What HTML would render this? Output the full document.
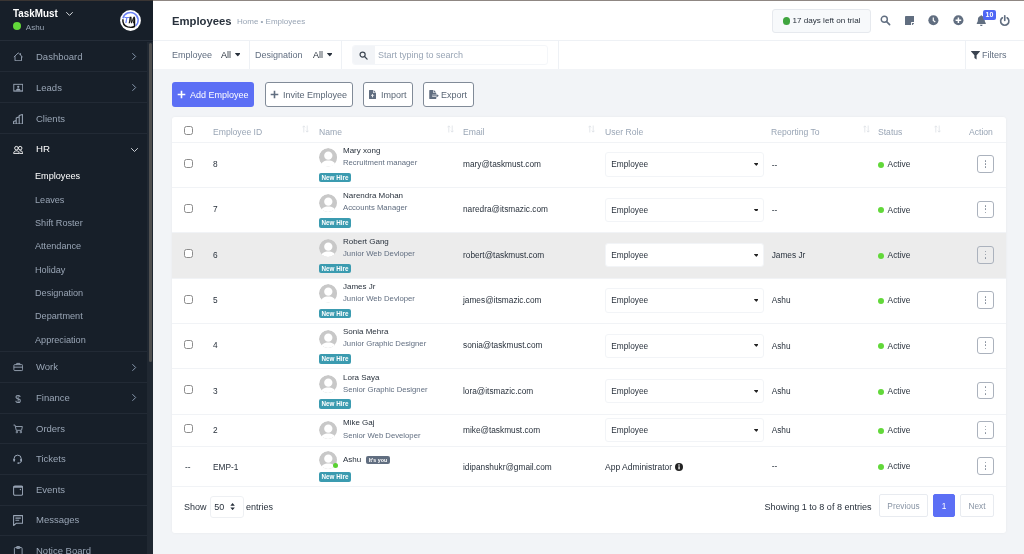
<!DOCTYPE html>
<html lang="en">
<head>
<meta charset="utf-8">
<title>Employees</title>
<style>
*{box-sizing:border-box;margin:0;padding:0}
html,body{width:1024px;height:554px;overflow:hidden}
body{font-family:"Liberation Sans",sans-serif;background:#f2f4f7;color:#28313c;position:relative;font-size:8.3px}
.wrap{position:absolute;left:0;top:0;width:1024px;height:554px;will-change:transform}
.topline{position:absolute;left:0;top:0;width:1024px;height:1px;background:linear-gradient(90deg,#3a3533 0,#3a3533 153px,#8f8783 153px);z-index:10}
.sb{position:absolute;left:0;top:1px;width:153px;height:553px;background:#171f29;overflow:hidden}
.sbh{position:absolute;left:0;top:0;width:153px;height:40px;border-bottom:1px solid #252d38}
.sbh .t{position:absolute;left:13px;top:5.700px;color:#fff;font-size:10.900px;font-weight:bold;transform:scaleX(.905);transform-origin:0 50%;white-space:nowrap}
.sbh .u{position:absolute;left:25.800px;top:21.500px;color:#99a5b5;font-size:8.050px}
.sbh .dot{position:absolute;left:12.700px;top:21px;width:8.200px;height:8.200px;border-radius:50%;background:#62d83a}
.sbh svg.chev{position:absolute;left:65px;top:10px}
.logo{position:absolute;left:120px;top:9px;width:21px;height:21px}
.mi{position:absolute;left:0;width:147px;height:31px;border-bottom:1px solid #222a35;color:#99a5b5;font-size:9.5px}
.mi span{position:absolute;left:36px;top:10px;white-space:nowrap}
.mi svg.ic{position:absolute;left:12.800px;top:10.800px}
.mi svg.ar{position:absolute;left:131px;top:10.600px}
.mi svg.ad{position:absolute;left:130px;top:13px}
.mi.act{color:#fff}
.smi{position:absolute;left:35px;color:#99a5b5;font-size:9.150px;white-space:nowrap}
.smi.act{color:#fff}
.trk{position:absolute;left:147.200px;top:41px;width:6px;height:513px;background:#202832}
.scr{position:absolute;left:148.900px;top:41.700px;width:3px;height:319.500px;background:#505050;border-radius:1.500px}
.hd{position:absolute;left:153px;top:1px;width:871px;height:40px;background:#fff;border-bottom:1px solid #eef1f5}
.hd h1{position:absolute;left:19px;top:13.700px;font-size:11.3px;font-weight:bold;color:#28313c}
.hd .bc{position:absolute;left:84px;top:15.500px;font-size:8px;color:#99a5b5;white-space:nowrap}
.trial{position:absolute;left:619px;top:8px;width:99px;height:23.700px;border:1px solid #e6e9ee;border-radius:3px;background:#f7f9fb;font-size:8.100px;color:#28313c}
.trial i{position:absolute;left:9.800px;top:7.200px;width:7.400px;height:7.400px;border-radius:50%;background:#3fa53f}
.trial span{position:absolute;left:19.500px;top:6.200px;white-space:nowrap}
.hic{position:absolute}
.bdg{position:absolute;left:830px;top:9px;width:13px;height:10px;border-radius:2px;background:#4f67f5;color:#fff;font-size:7px;font-weight:bold;text-align:center;line-height:10px}
.fb{position:absolute;left:153px;top:41px;width:871px;height:28px;background:#fff}
.fb .l{position:absolute;top:9px;font-size:9px;color:#616e80;white-space:nowrap}
.fb .v{position:absolute;top:9px;font-size:9px;color:#28313c;white-space:nowrap}
.fb .sep{position:absolute;top:0;width:1px;height:28px;background:#eef1f5}
.fb .car{position:absolute;top:12.300px}
.srch{position:absolute;left:199px;top:4px;width:196px;height:20px;border:1px solid #f4f6f9;border-radius:3px;background:#fff}
.srch .ig{position:absolute;left:0;top:0;width:22px;height:18px;background:#f2f4f7;border-radius:2px 0 0 2px}
.srch span{position:absolute;left:25px;top:4px;color:#99a5b5;font-size:9px;white-space:nowrap}
.btn{position:absolute;top:82px;height:25px;border-radius:3px;font-size:9px;white-space:nowrap}
.btn.p{background:#5c6ff5;color:#fff}
.btn.s{background:#fff;border:1px solid #818b98;color:#5a6675}
.btn span{position:absolute;top:7.500px}
.btn.s span{top:6.600px}
.card{position:absolute;left:172px;top:117px;width:834px;height:416px;background:#fff;border-radius:3px;box-shadow:0 0 3px rgba(0,0,0,.05)}
.th{position:absolute;top:9.700px;font-size:8.600px;color:#99a5b5;white-space:nowrap}
.so{position:absolute;top:7.500px}
.row{position:absolute;left:0;width:834px;border-top:1px solid #f1f3f6}
.row.hl{background:#ececec;background-clip:padding-box}
.cb{position:absolute;left:12px;width:8.800px;height:8.800px;border:1px solid #8c8c8c;border-radius:2.500px;background:#fff}
.c{position:absolute;font-size:8.300px;color:#28313c;white-space:nowrap}
.av{position:absolute;left:146.800px;width:18.600px;height:18.600px;border-radius:50%;overflow:hidden}
.on{position:absolute;left:161px;width:5px;height:5px;border-radius:50%;background:#59d131}
.nm{position:absolute;left:171px;font-size:8px;color:#28313c;white-space:nowrap}
.ds{position:absolute;left:171px;font-size:7.730px;color:#616e80;white-space:nowrap}
.nh{position:absolute;left:146.800px;width:32.400px;height:9.400px;background:#3b9bb0;border-radius:2px;color:#fff;font-size:6.300px;font-weight:bold;text-align:center;line-height:9.400px;white-space:nowrap}
.iy{position:absolute;left:193.600px;width:24.800px;height:8.400px;background:#616e80;border-radius:2px;color:#fff;font-size:5.300px;font-weight:bold;text-align:center;line-height:8.400px;white-space:nowrap}
.sel{position:absolute;left:433.300px;width:158.500px;height:24.300px;border:1px solid #f2f4f7;border-radius:3px;background:#fff}
.sel span{position:absolute;left:5px;top:6px;font-size:8.300px;color:#28313c}
.sel svg{position:absolute;left:147.400px;top:9.900px}
.st{position:absolute;left:706.400px;width:6px;height:6px;border-radius:50%;background:#62d83a}
.ab{position:absolute;left:805.300px;width:16.600px;height:17.600px;border:1px solid #abb2bd;border-radius:3px;background:transparent}
.ab i{position:absolute;left:6.450px;width:1.700px;height:1.700px;background:#858e9b;border-radius:50%}
.ft{position:absolute;font-size:9px;color:#28313c;white-space:nowrap}
.len{position:absolute;left:37.700px;top:378.700px;width:34.200px;height:22.500px;border:1px solid #eef0f3;border-radius:3px;background:#fff}
.len span{position:absolute;left:3.600px;top:5.300px;font-size:9px;color:#28313c}
.pg{position:absolute;top:377px;height:23px;border:1px solid #e8ebf0;border-radius:2px;background:#fff;font-size:8.300px;text-align:center}
.pg span{display:block;margin-top:6px}
.pg.on{background:#5c6ff5;border-color:#5c6ff5;color:#fff}
</style>
</head>
<body>
<div class="wrap">
<div class="topline"></div>
<div class="sb">
<div class="sbh"><div class="t">TaskMust</div><svg class="chev" width="9" height="6" viewBox="0 0 9 6"><path d="M1.300 1.200l3.200 3.200 3.200-3.200" fill="none" stroke="#e4e7ea" stroke-width=".95"/></svg><div class="dot"></div><div class="u">Ashu</div><div class="logo"><svg width="21" height="21" viewBox="0 0 21 21"><circle cx="10.5" cy="10.5" r="10.4" fill="#fff"/><path d="M3 8.3A7.700 7.700 0 1 1 15.600 15.900" fill="none" stroke="#6b82f7" stroke-width="1.500"/><path d="M2.900 9.300c-.3 3.700 1.700 6.700 4.700 7.600 2.200.600 4.900.600 6.900-.4V8.300" fill="none" stroke="#111" stroke-width="1.450"/><text x="3.800" y="13.300" font-family="Liberation Sans,sans-serif" font-size="8.400" font-weight="bold" font-style="italic" fill="#6b82f7">T</text><text x="8.700" y="13.400" font-family="Liberation Sans,sans-serif" font-size="8.300" font-weight="bold" font-style="italic" fill="#111" stroke="#111" stroke-width=".3" textLength="6.100" lengthAdjust="spacingAndGlyphs">M</text></svg></div></div>
<div class="mi" style="top:40px"><svg class="ic" width="10.500" height="9.625" viewBox="0 0 12 11"><path d="M1 5.8L6 1l5 4.8M2.3 4.8V10h7.4V4.8M8.6 1.4v2" fill="none" stroke="currentColor" stroke-width="1.050" stroke-linejoin="round"/></svg><span>Dashboard</span><svg class="ar" width="6" height="9" viewBox="0 0 6 9"><path d="M1.400 1.200l3.300 3.300-3.300 3.300" fill="none" stroke="#8798ad" stroke-width="1"/></svg></div>
<div class="mi" style="top:71px"><svg class="ic" width="10.500" height="9.625" viewBox="0 0 12 11"><rect x="0.9" y="1.5" width="10.2" height="7.5" fill="none" stroke="currentColor" stroke-width="1.050"/><circle cx="6" cy="4.3" r="1.3" fill="currentColor"/><path d="M3.4 8.6c.3-1.7 1.3-2.3 2.6-2.3s2.3.6 2.6 2.3z" fill="currentColor"/><path d="M.5 10.3h11" fill="none" stroke="currentColor" stroke-width="1.050"/></svg><span>Leads</span><svg class="ar" width="6" height="9" viewBox="0 0 6 9"><path d="M1.400 1.200l3.300 3.300-3.300 3.300" fill="none" stroke="#8798ad" stroke-width="1"/></svg></div>
<div class="mi" style="top:102px"><svg class="ic" style="top:10.700px;left:12.900px" width="10" height="10.600" viewBox="0 0 10 10.600"><path d="M.6 10V7.400l2.600-.8V10M3.200 6.600V4l3-1.300V10M6.200 2.700V1.500L9.400.5V10M0 10.100h10" fill="none" stroke="currentColor" stroke-width="1.050" stroke-linejoin="round"/></svg><span>Clients</span></div>
<div class="mi act" style="top:133px;border-bottom:none"><svg class="ic" width="10.500" height="9.625" viewBox="0 0 12 11"><circle cx="3.9" cy="3.6" r="2" fill="none" stroke="currentColor" stroke-width="1.050"/><circle cx="8.2" cy="3.6" r="2" fill="none" stroke="currentColor" stroke-width="1.050"/><path d="M.7 9.6c.2-2 1.4-3 3.2-3s3 1 3.2 3zM7.6 6.7c2.2-.4 3.6.8 3.8 2.9H7.4" fill="none" stroke="currentColor" stroke-width="1.050" stroke-linejoin="round"/></svg><span style="top:9.300px;font-size:9.700px">HR</span><svg class="ad" width="9" height="6" viewBox="0 0 9 6"><path d="M1.200 1.200l3.300 3.300 3.300-3.300" fill="none" stroke="#d5d9de" stroke-width=".95"/></svg></div>
<div class="smi act" style="top:170.3px">Employees</div>
<div class="smi" style="top:193.7px">Leaves</div>
<div class="smi" style="top:217.0px">Shift Roster</div>
<div class="smi" style="top:240.4px">Attendance</div>
<div class="smi" style="top:263.7px">Holiday</div>
<div class="smi" style="top:287.1px">Designation</div>
<div class="smi" style="top:310.4px">Department</div>
<div class="smi" style="top:333.8px">Appreciation</div>
<div class="mi" style="top:350px;height:1px;border-bottom:1px solid #222a35"></div>
<div class="mi" style="top:351.30px"><svg class="ic" style="top:10px" width="10.500" height="9.625" viewBox="0 0 12 11"><rect x="1" y="3" width="10" height="6.8" rx="1" fill="none" stroke="currentColor" stroke-width="1.050"/><path d="M4.2 3V1.6h3.6V3M1 5.9h10" fill="none" stroke="currentColor" stroke-width="1.050"/></svg><span style="top:9.200px">Work</span><svg class="ar" width="6" height="9" viewBox="0 0 6 9"><path d="M1.400 1.200l3.300 3.300-3.300 3.300" fill="none" stroke="#8798ad" stroke-width="1"/></svg></div>
<div class="mi" style="top:381.85px"><svg class="ic" width="10.500" height="9.625" viewBox="0 0 12 11"><text x="2.600" y="10" font-family="Liberation Sans,sans-serif" font-size="11.500" fill="currentColor" stroke="currentColor" stroke-width=".12">$</text></svg><span style="top:9.200px">Finance</span><svg class="ar" width="6" height="9" viewBox="0 0 6 9"><path d="M1.400 1.200l3.300 3.300-3.300 3.300" fill="none" stroke="#8798ad" stroke-width="1"/></svg></div>
<div class="mi" style="top:412.40px"><svg class="ic" width="10.500" height="9.625" viewBox="0 0 12 11"><path d="M.6 1.2h1.7l1.4 6h6.1l.9-4.3H2.8" fill="none" stroke="currentColor" stroke-width="1.050" stroke-linejoin="round"/><circle cx="4.4" cy="9.2" r=".9" fill="none" stroke="currentColor" stroke-width="1.050"/><circle cx="9" cy="9.2" r=".9" fill="none" stroke="currentColor" stroke-width="1.050"/></svg><span style="top:9.200px">Orders</span></div>
<div class="mi" style="top:442.95px"><svg class="ic" style="top:10px;left:12.400px" width="11.300" height="10.400" viewBox="0 0 12 11"><path d="M2.2 7V5a3.8 3.8 0 0 1 7.6 0v2.6c0 1.3-1 2-2.6 2" fill="none" stroke="currentColor" stroke-width="1.050"/><rect x="1.4" y="5" width="1.8" height="3" rx=".6" fill="currentColor"/><rect x="8.8" y="5" width="1.8" height="3" rx=".6" fill="currentColor"/><circle cx="6.6" cy="9.6" r=".9" fill="currentColor"/></svg><span style="top:9.200px">Tickets</span></div>
<div class="mi" style="top:473.50px"><svg class="ic" style="left:12.900px;top:10.600px" width="10.200" height="10.800" viewBox="0 0 10.200 10.800"><rect x=".6" y=".9" width="9" height="9.300" rx="1.300" fill="none" stroke="currentColor" stroke-width="1.050"/><path d="M.8 1.900h8.600" stroke="currentColor" stroke-width="1.700"/><circle cx="7.400" cy="4.500" r=".65" fill="currentColor"/></svg><span style="top:9.200px">Events</span></div>
<div class="mi" style="top:504.05px"><svg class="ic" style="left:12.900px;top:10.200px" width="10.200" height="11" viewBox="0 0 10.200 11"><path d="M.6 .6h9v7.700H3.100L.6 10.500z" fill="none" stroke="currentColor" stroke-width="1.050" stroke-linejoin="round"/><path d="M2.400 3.100h5.400M2.400 5.300h3.800" fill="none" stroke="currentColor" stroke-width="1.050"/></svg><span style="top:9.200px">Messages</span></div>
<div class="mi" style="top:534.60px"><svg class="ic" width="10.500" height="9.625" viewBox="0 0 12 11"><rect x="1.6" y="1.8" width="8.8" height="9" rx="1" fill="none" stroke="currentColor" stroke-width="1.050"/><rect x="4" y=".6" width="4" height="2.2" rx=".6" fill="none" stroke="currentColor" stroke-width="1.050"/></svg><span style="top:9.200px">Notice Board</span></div>
<div class="trk"></div><div class="scr"></div>
</div>
<div class="hd"><h1>Employees</h1><div class="bc">Home • Employees</div>
<div class="trial"><i></i><span>17 days left on trial</span></div>
<svg class="hic" style="left:727.300px;top:14.100px" width="10.700" height="10.700" viewBox="0 0 12 12"><circle cx="4.800" cy="4.800" r="3.400" fill="none" stroke="#616e80" stroke-width="1.600"/><path d="M7.400 7.400l3.400 3.400" stroke="#616e80" stroke-width="1.800" stroke-linecap="round"/></svg>
<svg class="hic" style="left:751.800px;top:14.500px" width="9.500" height="9.600" viewBox="0 0 10 10"><path d="M.9 0h8.200a.9.9 0 0 1 .9.900V6.300H7.200a.9.9 0 0 0-.9.900V10H.9A.9.900 0 0 1 0 9.100V.9A.9.900 0 0 1 .9 0z" fill="#616e80"/><path d="M7.300 10V7.600a.3.300 0 0 1 .3-.3H10z" fill="#616e80"/></svg>
<svg class="hic" style="left:775.100px;top:14.200px" width="11" height="11" viewBox="0 0 11 11"><circle cx="5.400" cy="5.200" r="5.050" fill="#616e80"/><path d="M5.300 2.400v3.100l2 1.400" fill="none" stroke="#fff" stroke-width="1.200"/></svg>
<svg class="hic" style="left:799.700px;top:14.100px" width="11" height="11" viewBox="0 0 11 11"><circle cx="5.400" cy="5.300" r="5.050" fill="#616e80"/><path d="M5.400 2.500v5.600M2.600 5.300h5.600" fill="none" stroke="#fff" stroke-width="1.500"/></svg>
<svg class="hic" style="left:823px;top:13.700px" width="11" height="12" viewBox="0 0 11 12"><path d="M5.300 0.300c.5 0 .8.300.8.800 1.700.400 2.600 1.700 2.600 3.600 0 1.800.500 2.700 1.100 3.300.300.400.1.900-.4.900H1.200c-.5 0-.7-.5-.4-.9.600-.6 1.100-1.500 1.100-3.300 0-1.900.9-3.200 2.600-3.600 0-.5.300-.8.800-.8zM4 9.700h2.600c0 .8-.6 1.400-1.300 1.400S4 10.500 4 9.700z" fill="#616e80"/></svg>
<div class="bdg">10</div>
<svg class="hic" style="left:846.400px;top:14px" width="11.500" height="11.500" viewBox="0 0 12 12"><path d="M3.500 2.900a4.300 4.300 0 1 0 5 0" fill="none" stroke="#616e80" stroke-width="1.700" stroke-linecap="round"/><path d="M6 .9v4.800" stroke="#616e80" stroke-width="1.700" stroke-linecap="round"/></svg>
</div>
<div class="fb">
<div class="l" style="left:19px">Employee</div><div class="v" style="left:68px">All</div><svg class="car" style="left:81.800px" width="5.600" height="3.300" viewBox="0 0 5.600 3.300"><path d="M.3 0h5a.3.300 0 0 1 .2.500L3 3.200a.3.300 0 0 1-.4 0L.1.500A.3.300 0 0 1 .3 0z" fill="#28313c"/></svg>
<div class="sep" style="left:96px"></div>
<div class="l" style="left:102px">Designation</div><div class="v" style="left:160px">All</div><svg class="car" style="left:173.800px" width="5.600" height="3.300" viewBox="0 0 5.600 3.300"><path d="M.3 0h5a.3.300 0 0 1 .2.500L3 3.200a.3.300 0 0 1-.4 0L.1.500A.3.300 0 0 1 .3 0z" fill="#28313c"/></svg>
<div class="sep" style="left:188px"></div>
<div class="srch"><div class="ig"><svg width="9" height="9" viewBox="0 0 12 12" style="position:absolute;left:5.800px;top:5px"><circle cx="4.800" cy="4.800" r="3.400" fill="none" stroke="#3d4652" stroke-width="1.600"/><path d="M7.400 7.400l3.400 3.400" stroke="#3d4652" stroke-width="1.700" stroke-linecap="round"/></svg></div><span>Start typing to search</span></div>
<div class="sep" style="left:405px"></div>
<div class="sep" style="left:812px"></div>
<svg style="position:absolute;left:818px;top:10px" width="9" height="9" viewBox="0 0 9 9"><path d="M.300 0h8.400c.3 0 .4.300.2.500L5.600 4.200V8.500L3.400 7V4.200L.1.500C-.1.300 0 0 .3 0z" fill="#3a4350"/></svg>
<div class="l" style="left:829px">Filters</div>
</div>
<div class="btn p" style="left:172px;width:82px"><svg style="position:absolute;left:4.800px;top:8px" width="9" height="9" viewBox="0 0 9 9"><path d="M4.500 .7v7.600M.7 4.500h7.600" stroke="#fff" stroke-width="1.600"/></svg><span style="left:18px">Add Employee</span></div>
<div class="btn s" style="left:265px;width:88px"><svg style="position:absolute;left:4px;top:7px" width="9" height="9" viewBox="0 0 9 9"><path d="M4.500 .7v7.600M.7 4.500h7.600" stroke="#616e80" stroke-width="1.600"/></svg><span style="left:17px">Invite Employee</span></div>
<div class="btn s" style="left:363px;width:50px"><svg style="position:absolute;left:4.700px;top:7.300px" width="7" height="9" viewBox="0 0 7 9"><path d="M0 .6C0 .3.300 0 .6 0H4v2.400c0 .3.300.6.600.6H7v5.400c0 .3-.3.600-.6.600H.6C.3 9 0 8.700 0 8.400zM4.600 0L7 2.400H4.600z" fill="#616e80"/><path d="M3.500 7.300V4.600M2.200 5.700l1.300-1.300 1.300 1.300" stroke="#fff" stroke-width=".9" fill="none"/></svg><span style="left:17px">Import</span></div>
<div class="btn s" style="left:423px;width:51px"><svg style="position:absolute;left:4.700px;top:7.300px" width="10.500" height="9" viewBox="0 0 10 9"><path d="M0 .6C0 .3.300 0 .6 0H4v2.400c0 .3.300.6.600.6H7v5.400c0 .3-.3.600-.6.600H.6C.3 9 0 8.700 0 8.400zM4.600 0L7 2.400H4.600z" fill="#616e80"/><path d="M3 5.800h5" stroke="#fff" stroke-width="2.200"/><path d="M3 5.800h4.500" stroke="#616e80" stroke-width="1"/><path d="M7.300 4l2.300 1.800-2.300 1.800z" fill="#616e80"/></svg><span style="left:17px">Export</span></div>
<div class="card">
<div class="cb" style="top:9px"></div>
<div class="th" style="left:41px">Employee ID</div>
<div class="th" style="left:147px">Name</div>
<div class="th" style="left:291px">Email</div>
<div class="th" style="left:433px">User Role</div>
<div class="th" style="left:599px">Reporting To</div>
<div class="th" style="left:706px">Status</div>
<div class="th" style="left:797px">Action</div>
<svg class="so" style="left:130.0px" width="7" height="8" viewBox="0 0 7 8"><path d="M1.800 7.500V1M.5 2.300L1.800.8l1.300 1.500M5.200.5V7M3.900 5.700l1.300 1.500 1.300-1.500" fill="none" stroke="#d9dde3" stroke-width=".7"/></svg>
<svg class="so" style="left:274.5px" width="7" height="8" viewBox="0 0 7 8"><path d="M1.800 7.500V1M.5 2.300L1.800.8l1.300 1.500M5.200.5V7M3.900 5.700l1.300 1.500 1.300-1.500" fill="none" stroke="#d9dde3" stroke-width=".7"/></svg>
<svg class="so" style="left:416.0px" width="7" height="8" viewBox="0 0 7 8"><path d="M1.800 7.500V1M.5 2.300L1.800.8l1.300 1.500M5.200.5V7M3.900 5.700l1.300 1.500 1.300-1.500" fill="none" stroke="#d9dde3" stroke-width=".7"/></svg>
<svg class="so" style="left:691.0px" width="7" height="8" viewBox="0 0 7 8"><path d="M1.800 7.500V1M.5 2.300L1.800.8l1.300 1.500M5.200.5V7M3.900 5.700l1.300 1.500 1.300-1.500" fill="none" stroke="#d9dde3" stroke-width=".7"/></svg>
<svg class="so" style="left:762.0px" width="7" height="8" viewBox="0 0 7 8"><path d="M1.800 7.500V1M.5 2.300L1.800.8l1.300 1.500M5.200.5V7M3.900 5.700l1.300 1.500 1.300-1.500" fill="none" stroke="#d9dde3" stroke-width=".7"/></svg>
<div class="row" style="top:24.80px;height:45.30px">
<div class="cb" style="top:16.1px"></div>
<div class="c" style="left:41px;top:16.4px">8</div>
<div class="av" style="top:5.5px"><svg width="18.600" height="18.600" viewBox="0 0 18 18"><circle cx="9" cy="9" r="9" fill="#c8c8c8"/><circle cx="9" cy="7.400" r="4" fill="#fff"/><path d="M1.500 18c.4-4.200 3.400-5.900 7.500-5.900s7.100 1.700 7.500 5.900z" fill="#fff"/></svg></div>
<div class="nm" style="top:3.400px">Mary xong</div>
<div class="ds" style="top:15.400px">Recruitment manager</div>
<div class="nh" style="top:30.200px">New Hire</div>
<div class="c" style="left:291px;top:16.4px">mary@taskmust.com</div>
<div class="sel" style="top:9.6px"><span>Employee</span><svg width="4.700" height="2.800" viewBox="0 0 5.600 3.300"><path d="M.3 0h5a.3.300 0 0 1 .2.500L3 3.200a.3.300 0 0 1-.4 0L.1.500A.3.300 0 0 1 .3 0z" fill="#222"/></svg></div>
<div class="c" style="left:599.700px;top:16.8px">--</div>
<div class="st" style="top:19.4px"></div>
<div class="c" style="left:715.600px;top:16.6px;font-size:8.400px">Active</div>
<div class="ab" style="top:12.6px"><i style="top:3.600px"></i><i style="top:6.800px"></i><i style="top:10px"></i></div>
</div>
<div class="row" style="top:70.10px;height:45.30px">
<div class="cb" style="top:16.1px"></div>
<div class="c" style="left:41px;top:16.4px">7</div>
<div class="av" style="top:5.5px"><svg width="18.600" height="18.600" viewBox="0 0 18 18"><circle cx="9" cy="9" r="9" fill="#c8c8c8"/><circle cx="9" cy="7.400" r="4" fill="#fff"/><path d="M1.500 18c.4-4.200 3.400-5.900 7.500-5.900s7.100 1.700 7.500 5.900z" fill="#fff"/></svg></div>
<div class="nm" style="top:3.400px">Narendra Mohan</div>
<div class="ds" style="top:15.400px">Accounts Manager</div>
<div class="nh" style="top:30.200px">New Hire</div>
<div class="c" style="left:291px;top:16.4px">naredra@itsmazic.com</div>
<div class="sel" style="top:9.6px"><span>Employee</span><svg width="4.700" height="2.800" viewBox="0 0 5.600 3.300"><path d="M.3 0h5a.3.300 0 0 1 .2.500L3 3.200a.3.300 0 0 1-.4 0L.1.500A.3.300 0 0 1 .3 0z" fill="#222"/></svg></div>
<div class="c" style="left:599.700px;top:16.8px">--</div>
<div class="st" style="top:19.4px"></div>
<div class="c" style="left:715.600px;top:16.6px;font-size:8.400px">Active</div>
<div class="ab" style="top:12.6px"><i style="top:3.600px"></i><i style="top:6.800px"></i><i style="top:10px"></i></div>
</div>
<div class="row hl" style="top:115.40px;height:45.60px">
<div class="cb" style="top:16.1px"></div>
<div class="c" style="left:41px;top:16.4px">6</div>
<div class="av" style="top:5.5px"><svg width="18.600" height="18.600" viewBox="0 0 18 18"><circle cx="9" cy="9" r="9" fill="#c8c8c8"/><circle cx="9" cy="7.400" r="4" fill="#fff"/><path d="M1.500 18c.4-4.200 3.400-5.900 7.500-5.900s7.100 1.700 7.500 5.900z" fill="#fff"/></svg></div>
<div class="nm" style="top:3.400px">Robert Gang</div>
<div class="ds" style="top:15.400px">Junior Web Devloper</div>
<div class="nh" style="top:30.200px">New Hire</div>
<div class="c" style="left:291px;top:16.4px">robert@taskmust.com</div>
<div class="sel" style="top:9.6px"><span>Employee</span><svg width="4.700" height="2.800" viewBox="0 0 5.600 3.300"><path d="M.3 0h5a.3.300 0 0 1 .2.500L3 3.200a.3.300 0 0 1-.4 0L.1.500A.3.300 0 0 1 .3 0z" fill="#222"/></svg></div>
<div class="c" style="left:599.700px;top:16.8px">James Jr</div>
<div class="st" style="top:19.4px"></div>
<div class="c" style="left:715.600px;top:16.6px;font-size:8.400px">Active</div>
<div class="ab" style="top:12.6px"><i style="top:3.600px"></i><i style="top:6.800px"></i><i style="top:10px"></i></div>
</div>
<div class="row" style="top:160.70px;height:45.30px">
<div class="cb" style="top:16.1px"></div>
<div class="c" style="left:41px;top:16.4px">5</div>
<div class="av" style="top:5.5px"><svg width="18.600" height="18.600" viewBox="0 0 18 18"><circle cx="9" cy="9" r="9" fill="#c8c8c8"/><circle cx="9" cy="7.400" r="4" fill="#fff"/><path d="M1.500 18c.4-4.200 3.400-5.900 7.500-5.900s7.100 1.700 7.500 5.900z" fill="#fff"/></svg></div>
<div class="nm" style="top:3.400px">James Jr</div>
<div class="ds" style="top:15.400px">Junior Web Devloper</div>
<div class="nh" style="top:30.200px">New Hire</div>
<div class="c" style="left:291px;top:16.4px">james@itsmazic.com</div>
<div class="sel" style="top:9.6px"><span>Employee</span><svg width="4.700" height="2.800" viewBox="0 0 5.600 3.300"><path d="M.3 0h5a.3.300 0 0 1 .2.500L3 3.200a.3.300 0 0 1-.4 0L.1.500A.3.300 0 0 1 .3 0z" fill="#222"/></svg></div>
<div class="c" style="left:599.700px;top:16.8px">Ashu</div>
<div class="st" style="top:19.4px"></div>
<div class="c" style="left:715.600px;top:16.6px;font-size:8.400px">Active</div>
<div class="ab" style="top:12.6px"><i style="top:3.600px"></i><i style="top:6.800px"></i><i style="top:10px"></i></div>
</div>
<div class="row" style="top:206.00px;height:45.30px">
<div class="cb" style="top:16.1px"></div>
<div class="c" style="left:41px;top:16.4px">4</div>
<div class="av" style="top:5.5px"><svg width="18.600" height="18.600" viewBox="0 0 18 18"><circle cx="9" cy="9" r="9" fill="#c8c8c8"/><circle cx="9" cy="7.400" r="4" fill="#fff"/><path d="M1.500 18c.4-4.200 3.400-5.900 7.500-5.900s7.100 1.700 7.500 5.900z" fill="#fff"/></svg></div>
<div class="nm" style="top:3.400px">Sonia Mehra</div>
<div class="ds" style="top:15.400px">Junior Graphic Designer</div>
<div class="nh" style="top:30.200px">New Hire</div>
<div class="c" style="left:291px;top:16.4px">sonia@taskmust.com</div>
<div class="sel" style="top:9.6px"><span>Employee</span><svg width="4.700" height="2.800" viewBox="0 0 5.600 3.300"><path d="M.3 0h5a.3.300 0 0 1 .2.500L3 3.200a.3.300 0 0 1-.4 0L.1.500A.3.300 0 0 1 .3 0z" fill="#222"/></svg></div>
<div class="c" style="left:599.700px;top:16.8px">Ashu</div>
<div class="st" style="top:19.4px"></div>
<div class="c" style="left:715.600px;top:16.6px;font-size:8.400px">Active</div>
<div class="ab" style="top:12.6px"><i style="top:3.600px"></i><i style="top:6.800px"></i><i style="top:10px"></i></div>
</div>
<div class="row" style="top:251.30px;height:45.30px">
<div class="cb" style="top:16.1px"></div>
<div class="c" style="left:41px;top:16.4px">3</div>
<div class="av" style="top:5.5px"><svg width="18.600" height="18.600" viewBox="0 0 18 18"><circle cx="9" cy="9" r="9" fill="#c8c8c8"/><circle cx="9" cy="7.400" r="4" fill="#fff"/><path d="M1.500 18c.4-4.200 3.400-5.900 7.500-5.900s7.100 1.700 7.500 5.900z" fill="#fff"/></svg></div>
<div class="nm" style="top:3.400px">Lora Saya</div>
<div class="ds" style="top:15.400px">Senior Graphic Designer</div>
<div class="nh" style="top:30.200px">New Hire</div>
<div class="c" style="left:291px;top:16.4px">lora@itsmazic.com</div>
<div class="sel" style="top:9.6px"><span>Employee</span><svg width="4.700" height="2.800" viewBox="0 0 5.600 3.300"><path d="M.3 0h5a.3.300 0 0 1 .2.500L3 3.200a.3.300 0 0 1-.4 0L.1.500A.3.300 0 0 1 .3 0z" fill="#222"/></svg></div>
<div class="c" style="left:599.700px;top:16.8px">Ashu</div>
<div class="st" style="top:19.4px"></div>
<div class="c" style="left:715.600px;top:16.6px;font-size:8.400px">Active</div>
<div class="ab" style="top:12.6px"><i style="top:3.600px"></i><i style="top:6.800px"></i><i style="top:10px"></i></div>
</div>
<div class="row" style="top:296.60px;height:32.80px">
<div class="cb" style="top:9.9px"></div>
<div class="c" style="left:41px;top:10.2px">2</div>
<div class="av" style="top:6.1px"><svg width="18.600" height="18.600" viewBox="0 0 18 18"><circle cx="9" cy="9" r="9" fill="#c8c8c8"/><circle cx="9" cy="7.400" r="4" fill="#fff"/><path d="M1.500 18c.4-4.200 3.400-5.900 7.500-5.900s7.100 1.700 7.500 5.900z" fill="#fff"/></svg></div>
<div class="nm" style="top:3.700px">Mike Gaj</div>
<div class="ds" style="top:16.300px">Senior Web Developer</div>
<div class="c" style="left:291px;top:10.2px">mike@taskmust.com</div>
<div class="sel" style="top:3.4px"><span>Employee</span><svg width="4.700" height="2.800" viewBox="0 0 5.600 3.300"><path d="M.3 0h5a.3.300 0 0 1 .2.500L3 3.200a.3.300 0 0 1-.4 0L.1.500A.3.300 0 0 1 .3 0z" fill="#222"/></svg></div>
<div class="c" style="left:599.700px;top:10.5px">Ashu</div>
<div class="st" style="top:13.2px"></div>
<div class="c" style="left:715.600px;top:10.4px;font-size:8.400px">Active</div>
<div class="ab" style="top:6.4px"><i style="top:3.600px"></i><i style="top:6.800px"></i><i style="top:10px"></i></div>
</div>
<div class="row" style="top:329.40px;height:39.60px">
<div class="c" style="left:13px;top:14.5px">--</div>
<div class="c" style="left:41px;top:14.5px">EMP-1</div>
<div class="av" style="top:3.3px"><svg width="18.600" height="18.600" viewBox="0 0 18 18"><circle cx="9" cy="9" r="9" fill="#c8c8c8"/><circle cx="9" cy="7.400" r="4" fill="#fff"/><path d="M1.500 18c.4-4.200 3.400-5.900 7.500-5.900s7.100 1.700 7.500 5.900z" fill="#fff"/></svg></div>
<div class="on" style="top:16px"></div>
<div class="nm" style="top:7.800px">Ashu</div>
<div class="iy" style="top:8.200px">It's you</div>
<div class="nh" style="top:24.800px">New Hire</div>
<div class="c" style="left:291px;top:14.5px">idipanshukr@gmail.com</div>
<div class="c" style="left:433px;top:14.5px;font-size:8.500px">App Administrator</div>
<svg style="position:absolute;left:503.300px;top:15.7px" width="8" height="8" viewBox="0 0 8 8"><circle cx="4" cy="4" r="4" fill="#222"/><rect x="3.400" y="3.300" width="1.300" height="3" fill="#fff"/><circle cx="4" cy="2" r=".8" fill="#fff"/></svg>
<div class="c" style="left:599.700px;top:13.9px">--</div>
<div class="st" style="top:16.6px"></div>
<div class="c" style="left:715.600px;top:13.8px;font-size:8.400px">Active</div>
<div class="ab" style="top:9.8px"><i style="top:3.600px"></i><i style="top:6.800px"></i><i style="top:10px"></i></div>
</div>
<div class="row" style="top:369.00px;height:1px"></div>
<div class="ft" style="left:12px;top:384.500px">Show</div>
<div class="len"><span>50</span><svg width="5.200" height="7.200" viewBox="0 0 5 8" style="position:absolute;left:19.300px;top:6.600px"><path d="M2.500 0L5 3H0zM2.500 8L5 5H0z" fill="#28313c"/></svg></div>
<div class="ft" style="left:74px;top:384.500px">entries</div>
<div class="ft" style="left:592.500px;top:384.500px;font-size:9.050px">Showing 1 to 8 of 8 entries</div>
<div class="pg" style="left:707px;width:49px;color:#8894a4"><span>Previous</span></div>
<div class="pg on" style="left:761px;width:22px"><span>1</span></div>
<div class="pg" style="left:788px;width:34px;color:#8894a4"><span>Next</span></div>
</div>
</div>
</body>
</html>
